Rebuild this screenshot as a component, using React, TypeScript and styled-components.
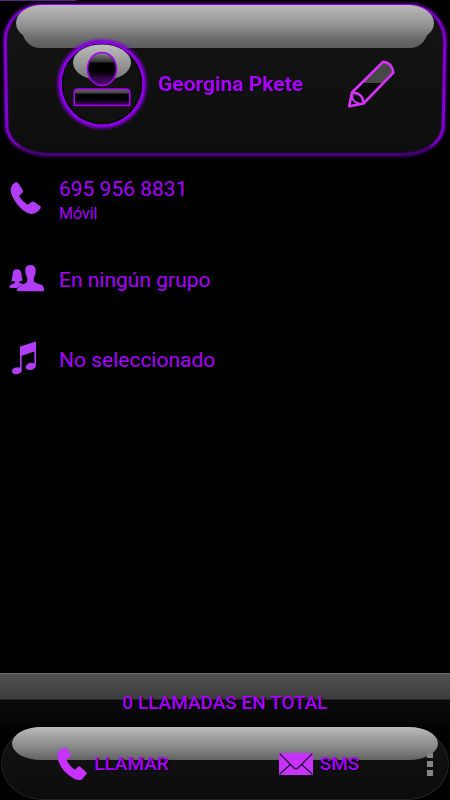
import React from "react";
import styled, { createGlobalStyle } from "styled-components";

const color = {
  text: "#a800ff",
  icon: "#b23df8",
  bright: "#c832ff",
  ring: "#8a00e0",
};

const GlobalStyle = createGlobalStyle`
  *, *::before, *::after { box-sizing: border-box; }
  body {
    margin: 0;
    background: #000;
    color: ${color.text};
    font-family: Roboto, "Liberation Sans", sans-serif;
  }
  h1, p, ul { margin: 0; padding: 0; }
`;

const Screen = styled.main`
  min-height: 100vh;
  display: flex;
  flex-direction: column;
  background: linear-gradient(#56267a, #56267a) 0 0 / 17% 1px no-repeat #000;
`;

const Header = styled.header`
  position: relative;
  isolation: isolate;
  display: flex;
  align-items: center;
  height: 152px;
  margin: 4px 3px 3px;
  padding: 8px 49px 0 51px;

  &::before {
    content: "";
    position: absolute;
    z-index: -2;
    inset: 0 0 -2px;
    border: 3px solid #8200d2;
    border-top: 2px solid #8800d8;
    border-bottom: 2px solid #500086;
    border-radius: 38px 38px 42px 42px / 38px 38px 30px 30px;
    background: linear-gradient(#141414, #0e0e0e);
    box-shadow: 0 0 3px 1px #4d0080, inset 0 0 2px #5b0096;
    transform: perspective(1000px) rotateX(-5deg);
    transform-origin: top;
  }
`;

const HeaderGloss = styled.span`
  position: absolute;
  z-index: -1;
  inset: 1px 13px auto;
  height: 43px;

  &::before,
  &::after {
    content: "";
    position: absolute;
    background-image: linear-gradient(#bababa, #959595 45%, #6e6e6e 75%, #5c5c5c);
    background-size: 100% 43px;
  }
  &::before {
    inset: 0 0 7px;
    border-radius: 26px / 18px;
  }
  &::after {
    inset: 20px 5px 0;
    background-position: 0 -20px;
    border-radius: 0 0 18px 18px / 0 0 23px 23px;
  }
`;

const ContactName = styled.h1`
  flex: 1;
  margin-left: 8px;
  font-size: 21px;
  line-height: 28px;
  font-weight: 700;
  text-shadow: 1px 1px 1px #000;
`;

const PlainButton = styled.button`
  display: flex;
  align-items: center;
  padding: 0;
  border: 0;
  background: none;
  color: inherit;
  font: inherit;
  cursor: pointer;
`;

const Details = styled.ul`
  flex: 1;
  list-style: none;
`;

const DetailRow = styled.li`
  display: flex;
  align-items: center;
  gap: 7px;
  height: 80px;
`;

const IconCell = styled.span`
  display: flex;
  justify-content: center;
  width: 52px;
  padding-bottom: 2px;
  color: ${color.icon};
`;

const Primary = styled.p`
  padding-top: 2px;
  font-size: 21px;
  line-height: 28px;
`;

const Secondary = styled.p`
  font-size: 16px;
  line-height: 22px;
`;

const CallTotal = styled.div`
  display: flex;
  align-items: center;
  justify-content: center;
  height: 54px;
  padding-top: 4px;
  border-top: 1px solid #6a6a6a;
  background: linear-gradient(#525252, #3c3c3c 25px, #0b0b0b 26px, #050505);
  font-size: 19px;
  font-weight: 500;
  text-shadow: 1px 1px 1px #000;
`;

const ActionBar = styled.footer`
  position: relative;
  isolation: isolate;
  display: grid;
  grid-template-columns: 1fr 1fr 16px;
  align-items: center;
  height: 73px;
  margin: 0 1px;
  padding: 0 10px 0 8px;
  border: 1px solid #222;
  border-radius: 42px / 37px;
  background: linear-gradient(#141414, #0c0c0c);

  &::before {
    content: "";
    position: absolute;
    z-index: -1;
    inset: -1px 10px auto;
    height: 33px;
    border-radius: 30px / 17px;
    background: linear-gradient(#bcbcbc, #989898 40%, #858585 65%, #626262);
  }
`;

const Action = styled(PlainButton)`
  justify-content: center;
  gap: 7px;
  font-size: 19px;
  font-weight: 500;
  text-shadow: 1px 1px 1px #000;

  svg { color: ${color.bright}; }
`;

const MenuButton = styled(PlainButton)`
  flex-direction: column;
  justify-content: center;
  gap: 3px;
  padding-top: 2px;

  span {
    width: 6px;
    height: 6px;
    background: #858585;
    box-shadow: 0 0 1px 1px #111;
  }
  span:first-child {
    height: 5px;
    box-shadow: none;
  }
`;

const Avatar = () => (
  <svg width="96" height="96" viewBox="0 0 96 96" role="img" aria-label="Foto de contacto">
    <defs>
      <linearGradient id="shine" x2="0" y2="1">
        <stop stopColor="#bdbdbd" />
        <stop offset="1" stopColor="#757575" />
      </linearGradient>
      <linearGradient id="head" x2="0" y2="1">
        <stop stopColor="#8a8a8a" />
        <stop offset=".28" stopColor="#333" />
        <stop offset=".32" stopColor="#000" />
        <stop offset=".58" stopColor="#000" />
        <stop offset=".75" stopColor="#2c0640" />
        <stop offset="1" stopColor="#540a76" />
      </linearGradient>
      <linearGradient id="torso" x2="0" y2="1">
        <stop stopColor="#6b6b6b" />
        <stop offset=".26" stopColor="#3e3e3e" />
        <stop offset=".3" stopColor="#000" />
        <stop offset=".6" stopColor="#000" />
        <stop offset="1" stopColor="#400760" />
      </linearGradient>
      <filter id="glow" x="-20%" y="-20%" width="140%" height="140%">
        <feGaussianBlur stdDeviation="1.5" />
      </filter>
    </defs>
    <circle cx="48" cy="48" r="42" fill="none" stroke="#7f00d8" strokeWidth="5" filter="url(#glow)" />
    <circle cx="48" cy="48" r="41.3" fill="#111" stroke={color.ring} strokeWidth="3" />
    <circle cx="48" cy="48" r="39.6" fill="none" stroke="#000" strokeWidth="1.2" />
    <ellipse cx="48" cy="26.5" rx="29" ry="18" fill="url(#shine)" />
    <ellipse cx="48" cy="33" rx="14.5" ry="16.5" fill="url(#head)" stroke="#a600f5" strokeWidth="1.6" />
    <path d="M20.2 69.5V56.5Q20.2 53 24 53H72Q75.8 53 75.8 56.5V69.5Z" fill="url(#torso)" stroke="#a600f5" strokeWidth="1.6" />
  </svg>
);

const PencilIcon = () => (
  <svg width="52" height="52" viewBox="0 0 52 52" aria-hidden="true">
    <path d="M37 3.8Q46 5 48 14.5L17.5 46 3.2 48.6 6 34.5Z" fill="#090909" />
    <path d="M37 3.8Q46 5 48 14.5L37.5 25H15.5Z" fill="#484848" />
    <g fill="none" stroke="#d832ff" strokeWidth="2.6" strokeLinejoin="round">
      <path d="M37 3.8Q41 3.8 44.3 7 47 10 47.4 14.6L17.5 45.5 3.2 48.3 6 34.5Z" />
      <path d="M6 35Q16.5 34 17.5 45.5" />
      <path d="M6.5 36Q4.5 44 14.5 45.8" strokeWidth="1.8" />
    </g>
  </svg>
);

const PhoneIcon = () => (
  <svg width="32" height="32" viewBox="0 0 32 32" fill="currentColor" aria-hidden="true">
    <path d="M5 .7Q7-.3 8.5 1.5L12.8 8.3Q13.5 9.6 12.3 10.8L9.6 13.4Q9 14.3 10 15.5 13 20 17 22.3 18 22.8 18.8 22L21.5 19.9Q22.8 19 24.2 20L30 24Q31.2 25 30.5 26.5 27 31.5 21 32 14 31 7 22 0 13 .8 6.5 2 2 5 .7Z" />
  </svg>
);

const CallIcon = () => (
  <svg width="30" height="34" viewBox="0 0 30 34" fill="currentColor" aria-hidden="true">
    <path d="M7.5.3Q8.7-.2 9.4.9L13.7 7.8Q14.2 8.8 13.2 9.4L10 11.8Q9.4 12.4 9.8 13.3 12 18.5 17 22.2 17.8 22.8 18.5 22.2L21.3 19.6Q22.2 19 23.2 19.8L29.3 25.3Q30.1 26.1 29.4 27L25.6 31.8Q24.7 33 23.3 33 20 33.1 17.4 32 2.5 23.5.6 10.2.2 7.5.8 5.4 1.2 4 2.6 3.2Z" />
  </svg>
);

const GroupIcon = () => (
  <svg width="35" height="28" viewBox="0 0 35 28" fill="currentColor" aria-hidden="true">
    <path d="M8 5.2Q11.9 5.4 12.4 9.3 12.3 13 13.8 16.6L10.2 17.4V19L15.6 20.4 12.5 21.5Q9.5 22.5 7.8 24H4Q0 24.4.2 22.5 1 20.8 6 19V17.4L2.2 16.7Q3.8 13 3.7 9.3 4.1 5.3 8 5.2Z" />
    <path d="M21.5 1Q26.4 1.2 26.7 5.8 27.1 10.5 24.8 13.8L24.7 17.2Q25.5 18.6 33 21 35 22.3 35 27.3H8Q7.8 24.5 9.6 23 17.2 19.5 18.3 17.2L18.2 13.8Q16 10.5 16.2 5.8 16.6 1.2 21.5 1Z" />
  </svg>
);

const MusicIcon = () => (
  <svg width="28" height="34" viewBox="0 0 28 34" fill="currentColor" aria-hidden="true">
    <path d="M8 5.6 24 .5V24H22.4V10.6L9.6 14.8V30H8Z" />
    <ellipse cx="4.8" cy="29.8" rx="4.8" ry="3.3" transform="rotate(-14 4.8 29.8)" />
    <ellipse cx="18.8" cy="25.4" rx="5.2" ry="3.4" transform="rotate(-14 18.8 25.4)" />
  </svg>
);

const EnvelopeIcon = () => (
  <svg width="34" height="22" viewBox="0 0 34 22" aria-hidden="true">
    <rect width="34" height="22" rx="1" fill="currentColor" />
    <path d="M.8.8 14.8 14.8Q17 17 19.2 14.8L33.2.8M.8 21 11.3 11.4M33.2 21 22.7 11.4" fill="none" stroke="#250631" strokeWidth="1.3" />
  </svg>
);

export default function App() {
  return (
    <>
      <GlobalStyle />
      <Screen>
        <Header>
          <HeaderGloss />
          <Avatar />
          <ContactName>Georgina Pkete</ContactName>
          <PlainButton aria-label="Editar contacto">
            <PencilIcon />
          </PlainButton>
        </Header>
        <Details>
          <DetailRow>
            <IconCell><PhoneIcon /></IconCell>
            <div>
              <Primary>695 956 8831</Primary>
              <Secondary>Móvil</Secondary>
            </div>
          </DetailRow>
          <DetailRow>
            <IconCell><GroupIcon /></IconCell>
            <Primary>En ningún grupo</Primary>
          </DetailRow>
          <DetailRow>
            <IconCell><MusicIcon /></IconCell>
            <Primary>No seleccionado</Primary>
          </DetailRow>
        </Details>
        <CallTotal>0 LLAMADAS EN TOTAL</CallTotal>
        <ActionBar>
          <Action><CallIcon />LLAMAR</Action>
          <Action><EnvelopeIcon />SMS</Action>
          <MenuButton aria-label="Más opciones">
            <span />
            <span />
            <span />
          </MenuButton>
        </ActionBar>
      </Screen>
    </>
  );
}
